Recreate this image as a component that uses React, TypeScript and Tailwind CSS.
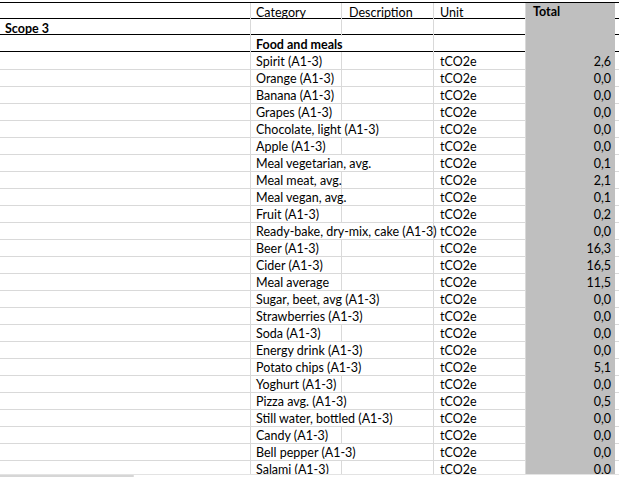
const rows: { name: string; value: string; wide?: boolean }[] = [
  { name: 'Spirit (A1-3)', value: '2,6' },
  { name: 'Orange (A1-3)', value: '0,0' },
  { name: 'Banana (A1-3)', value: '0,0' },
  { name: 'Grapes (A1-3)', value: '0,0' },
  { name: 'Chocolate, light (A1-3)', value: '0,0', wide: true },
  { name: 'Apple (A1-3)', value: '0,0' },
  { name: 'Meal vegetarian, avg.', value: '0,1', wide: true },
  { name: 'Meal meat, avg.', value: '2,1' },
  { name: 'Meal vegan, avg.', value: '0,1' },
  { name: 'Fruit (A1-3)', value: '0,2' },
  { name: 'Ready-bake, dry-mix, cake (A1-3)', value: '0,0', wide: true },
  { name: 'Beer (A1-3)', value: '16,3' },
  { name: 'Cider (A1-3)', value: '16,5' },
  { name: 'Meal average', value: '11,5' },
  { name: 'Sugar, beet, avg (A1-3)', value: '0,0', wide: true },
  { name: 'Strawberries (A1-3)', value: '0,0', wide: true },
  { name: 'Soda (A1-3)', value: '0,0' },
  { name: 'Energy drink (A1-3)', value: '0,0', wide: true },
  { name: 'Potato chips (A1-3)', value: '5,1', wide: true },
  { name: 'Yoghurt (A1-3)', value: '0,0' },
  { name: 'Pizza avg. (A1-3)', value: '0,5', wide: true },
  { name: 'Still water, bottled (A1-3)', value: '0,0', wide: true },
  { name: 'Candy (A1-3)', value: '0,0' },
  { name: 'Bell pepper (A1-3)', value: '0,0', wide: true },
  { name: 'Salami (A1-3)', value: '0,0' },
]

const grid = 'grid grid-cols-[251px_91px_92px_92px_89px_1fr]'
const cell = 'border-r border-[#d9d9d9] pl-[5px] pt-[2px] whitespace-nowrap'

export default function App() {
  return (
    <div className="relative h-[477px] w-[619px] overflow-hidden bg-white pt-[2px] text-[12.5px] leading-[15px] text-black [font-family:Lato,'Liberation_Sans',sans-serif]">
      {/* header */}
      <div className={`${grid} h-[17px] border-y border-black`}>
        <div className={cell} />
        <div className={cell}>Category</div>
        <div className={`${cell} pl-[7px]`}>Description</div>
        <div className={`${cell} pl-[6px]`}>Unit</div>
        <div className="bg-[#bfbfbf] pl-[7px] pt-[1px] font-bold">Total</div>
        <div />
      </div>
      <div className={`${grid} h-[16px] border-b border-black`}>
        <div className={`${cell} pl-[3px] font-bold`}>Scope 3</div>
        <div className={cell} />
        <div className={cell} />
        <div className={cell} />
        <div className="bg-[#bfbfbf]" />
        <div />
      </div>
      <div className={`${grid} h-[17px] border-b border-black`}>
        <div className={cell} />
        <div className={`${cell} col-span-2 font-bold`}>Food and meals</div>
        <div className={cell} />
        <div className="bg-[#bfbfbf]" />
        <div />
      </div>

      {/* data rows */}
      {rows.map((r) => (
        <div key={r.name} className={`${grid} h-[17px]`}>
          <div className={`${cell} border-b`} />
          {r.wide ? (
            <div className={`${cell} col-span-2 border-b`}>{r.name}</div>
          ) : (
            <>
              <div className={`${cell} border-b`}>{r.name}</div>
              <div className={`${cell} border-b`} />
            </>
          )}
          <div className={`${cell} border-b pl-[6px]`}>tCO2e</div>
          <div className="bg-[#bfbfbf] pr-[4px] pt-[2px] text-right">{r.value}</div>
          <div className="border-b border-[#d9d9d9]" />
        </div>
      ))}

      {/* horizontal scrollbar strip */}
      <div className="absolute bottom-0 left-0 right-0 h-[3px] border-t border-[#e3e3e3] bg-white">
        <div className="h-full w-[134px] rounded-r bg-[#d6d6d6]" />
      </div>
    </div>
  )
}
